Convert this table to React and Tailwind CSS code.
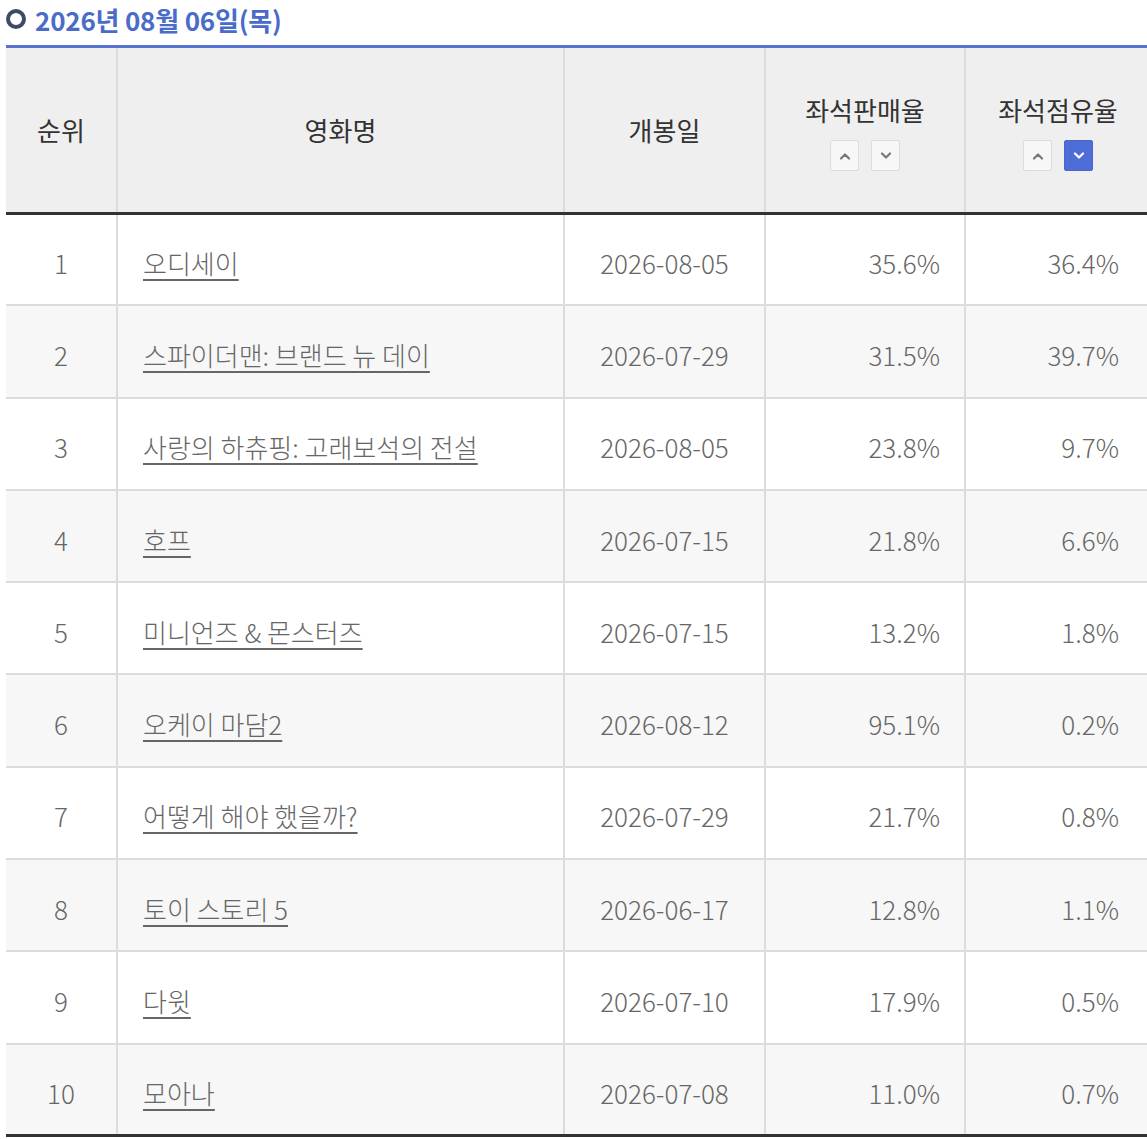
import React from 'react';

const rows = [
  { rank: 1, title: '오디세이', date: '2026-08-05', sales: '35.6%', share: '36.4%' },
  { rank: 2, title: '스파이더맨: 브랜드 뉴 데이', date: '2026-07-29', sales: '31.5%', share: '39.7%' },
  { rank: 3, title: '사랑의 하츄핑: 고래보석의 전설', date: '2026-08-05', sales: '23.8%', share: '9.7%' },
  { rank: 4, title: '호프', date: '2026-07-15', sales: '21.8%', share: '6.6%' },
  { rank: 5, title: '미니언즈 & 몬스터즈', date: '2026-07-15', sales: '13.2%', share: '1.8%' },
  { rank: 6, title: '오케이 마담2', date: '2026-08-12', sales: '95.1%', share: '0.2%' },
  { rank: 7, title: '어떻게 해야 했을까?', date: '2026-07-29', sales: '21.7%', share: '0.8%' },
  { rank: 8, title: '토이 스토리 5', date: '2026-06-17', sales: '12.8%', share: '1.1%' },
  { rank: 9, title: '다윗', date: '2026-07-10', sales: '17.9%', share: '0.5%' },
  { rank: 10, title: '모아나', date: '2026-07-08', sales: '11.0%', share: '0.7%' },
];

const Chevron = ({ up, active }) => (
  <svg width="12" height="8" viewBox="0 0 12 8" fill="none">
    <path
      d={up ? 'M2 6.5 L6 2.5 L10 6.5' : 'M2 1.5 L6 5.5 L10 1.5'}
      stroke={active ? '#ffffff' : '#777777'}
      strokeWidth="2.2"
      strokeLinecap="round"
      strokeLinejoin="round"
    />
  </svg>
);

function SortButtons({ activeDown }) {
  return (
    <div className="flex justify-center gap-[12px] mt-[14px]">
      <button className="w-[29px] h-[31px] flex items-center justify-center rounded-[2px] border border-[#dcdcdc] bg-[#f7f7f7]">
        <Chevron up />
      </button>
      <button
        className={`w-[29px] h-[31px] flex items-center justify-center rounded-[2px] border ${
          activeDown ? 'border-[#4a66cc] bg-[#4f6dd6]' : 'border-[#dcdcdc] bg-[#f7f7f7]'
        }`}
      >
        <Chevron active={activeDown} />
      </button>
    </div>
  );
}

export default function App() {
  return (
    <div className="w-[1147px] h-[1139px] overflow-hidden bg-white font-['Noto_Sans_CJK_KR','Noto_Sans',sans-serif]">
      {/* Title */}
      <div className="flex items-center h-[40px] pl-[6px] pb-[2px]">
        <span className="w-[20px] h-[20px] rounded-full border-[4px] border-[#3f4a66]" />
        <span className="ml-[9px] text-[26px] font-bold text-[#4a6bc9] tracking-[-0.2px]">2026년 08월 06일(목)</span>
      </div>

      {/* Table */}
      <div className="ml-[6px] mt-[5px] w-[1145px] border-t-[3px] border-[#5673d1]">
        <table className="table-fixed border-collapse w-[1145px] text-[#666] font-light">
          <colgroup>
            <col className="w-[111px]" />
            <col className="w-[447px]" />
            <col className="w-[201px]" />
            <col className="w-[200px]" />
            <col className="w-[186px]" />
          </colgroup>
          <thead>
            <tr className="h-[165px] bg-[#efefef] border-b-[3px] border-[#333] text-[#333] text-[26px] font-normal">
              <th className="font-normal border-r-2 border-[#dcdcdc]">순위</th>
              <th className="font-normal border-r-2 border-[#dcdcdc]">영화명</th>
              <th className="font-normal border-r-2 border-[#dcdcdc]">개봉일</th>
              <th className="font-normal border-r-2 border-[#dcdcdc] pt-[6px]">
                <div className="leading-[32px]">좌석판매율</div>
                <SortButtons />
              </th>
              <th className="font-normal border-r-2 border-[#dcdcdc] pt-[6px]">
                <div className="leading-[32px]">좌석점유율</div>
                <SortButtons activeDown />
              </th>
            </tr>
          </thead>
          <tbody className="text-[26px]">
            {rows.map((r, i) => (
              <tr
                key={r.rank}
                className={`h-[92.3px] ${i % 2 === 1 ? 'bg-[#f7f7f7]' : 'bg-white'} ${
                  i === rows.length - 1 ? 'border-b-[3px] border-[#333]' : 'border-b-2 border-[#dcdcdc]'
                }`}
              >
                <td className="text-center pt-[6px] border-r-2 border-[#dcdcdc]">{r.rank}</td>
                <td className="pl-[25px] pt-[6px] border-r-2 border-[#dcdcdc]">
                  <a className="underline underline-offset-[5px] decoration-[1.5px] text-[#666]">{r.title}</a>
                </td>
                <td className="text-center pt-[6px] border-r-2 border-[#dcdcdc]">{r.date}</td>
                <td className="text-right pr-[24px] pt-[6px] border-r-2 border-[#dcdcdc]">{r.sales}</td>
                <td className="text-right pr-[31px] pt-[6px] border-r-2 border-[#dcdcdc]">{r.share}</td>
              </tr>
            ))}
          </tbody>
        </table>
      </div>
    </div>
  );
}
